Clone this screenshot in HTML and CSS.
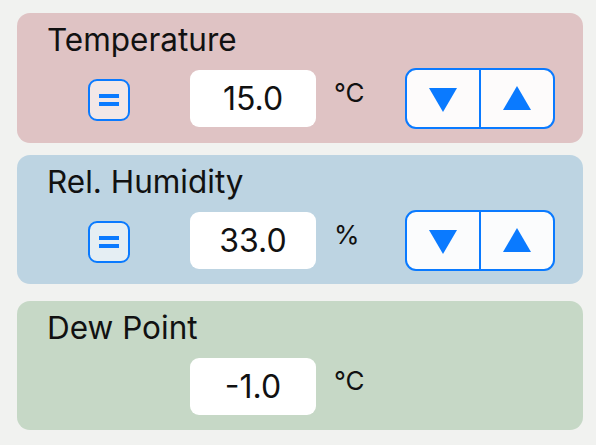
FILE: index.html
```html
<!DOCTYPE html>
<html>
<head>
<meta charset="utf-8">
<link rel="stylesheet" href="styles.css">
</head>
<body>
<div class="page">
  <section class="card card-temp">
    <div class="title">Temperature</div>
    <div class="row">
      <button class="eq"><span class="bar"></span><span class="bar"></span></button>
      <div class="value">15.0</div>
      <div class="unit">°C</div>
      <div class="stepper">
        <button class="half"><svg width="28" height="26" viewBox="0 0 28 26"><polygon points="0,2 28,2 14,26" fill="#0a7aff"/></svg></button>
        <button class="half"><svg width="28" height="26" viewBox="0 0 28 26"><polygon points="14,0 28,24 0,24" fill="#0a7aff"/></svg></button>
      </div>
    </div>
  </section>
  <section class="card card-hum">
    <div class="title">Rel. Humidity</div>
    <div class="row">
      <button class="eq"><span class="bar"></span><span class="bar"></span></button>
      <div class="value">33.0</div>
      <div class="unit">%</div>
      <div class="stepper">
        <button class="half"><svg width="28" height="26" viewBox="0 0 28 26"><polygon points="0,2 28,2 14,26" fill="#0a7aff"/></svg></button>
        <button class="half"><svg width="28" height="26" viewBox="0 0 28 26"><polygon points="14,0 28,24 0,24" fill="#0a7aff"/></svg></button>
      </div>
    </div>
  </section>
  <section class="card card-dew">
    <div class="title">Dew Point</div>
    <div class="row">
      <div class="eq-space"></div>
      <div class="value">-1.0</div>
      <div class="unit">°C</div>
    </div>
  </section>
</div>
</body>
</html>
```
FILE: styles.css
```css
html, body {
  margin: 0;
  padding: 0;
}
body {
  background: #f1f2f0;
  font-family: Inter, "Liberation Sans", Arial, sans-serif;
  font-weight: 370;
  color: #111;
  width: 596px;
  height: 445px;
  overflow: hidden;
}
.page {
  padding: 13px 13px 0 17px;
}
.card {
  width: 566px;
  height: 130px;
  border-radius: 13px;
  box-sizing: border-box;
  padding-top: 8px;
}
.card-temp { background: #dfc3c4; }
.card-hum { background: #bdd4e2; margin-top: 12px; height: 129px; }
.card-dew { background: #c6d8c6; margin-top: 17px; height: 129px; }

.title {
  padding-left: 30px;
  font-size: 31.5px;
  line-height: 38px;
  height: 38px;
}
.row {
  display: flex;
  align-items: center;
  height: 61px;
  margin-top: 9px;
  padding-left: 71px;
  padding-right: 28px;
}
.eq {
  width: 42px;
  height: 42px;
  box-sizing: border-box;
  border: 2px solid #0a7aff;
  border-radius: 9px;
  background: rgba(255,255,255,0.6);
  padding: 0;
  display: flex;
  flex-direction: column;
  align-items: center;
  justify-content: center;
  gap: 4px;
  margin-top: 2px;
}
.eq .bar {
  display: block;
  width: 20px;
  height: 4px;
  background: #0a7aff;
}
.eq-space {
  width: 42px;
}
.value {
  margin-left: 60px;
  width: 126px;
  height: 57px;
  background: #fff;
  border-radius: 9px;
  display: flex;
  align-items: center;
  justify-content: center;
  font-size: 32px;
}
.unit {
  margin-left: 18px;
  font-size: 26px;
  align-self: flex-start;
  margin-top: 9px;
}
.stepper {
  margin-left: auto;
  width: 150px;
  height: 61px;
  box-sizing: border-box;
  border: 2px solid #0a7aff;
  border-radius: 11px;
  background: rgba(255,255,255,0.93);
  display: flex;
  overflow: hidden;
}
.half {
  flex: 1;
  border: 0;
  background: transparent;
  padding: 0;
  display: flex;
  align-items: center;
  justify-content: center;
}
.half + .half {
  border-left: 2px solid #0a7aff;
}
.half svg { display: block; }
```
